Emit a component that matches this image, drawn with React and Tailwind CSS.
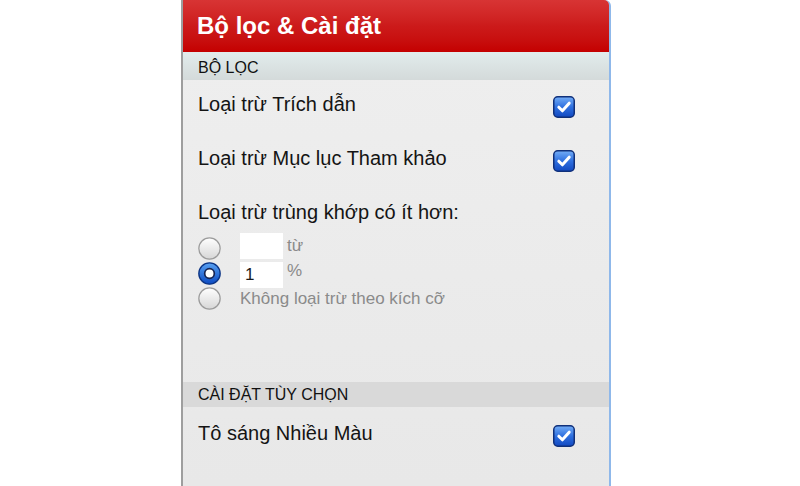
function CheckBox() {
  return (
    <svg width="22" height="22" viewBox="0 0 22 22" className="shrink-0">
      <defs>
        <linearGradient id="cbFill" x1="0" y1="0" x2="0" y2="1">
          <stop offset="0" stopColor="#74aef7" />
          <stop offset="0.5" stopColor="#2f70e0" />
          <stop offset="1" stopColor="#1148c0" />
        </linearGradient>
      </defs>
      <rect x="0.75" y="0.75" width="20.5" height="20.5" rx="4" fill="url(#cbFill)" stroke="#10307a" strokeWidth="1.5" />
      <path d="M5.8 11.2 L9.4 14.8 L16.2 7.2" fill="none" stroke="#ffffff" strokeWidth="3" strokeLinecap="round" strokeLinejoin="round" />
    </svg>
  );
}

function Radio({ checked }) {
  if (checked) {
    return (
      <svg width="23" height="23" viewBox="0 0 22 22" className="shrink-0">
        <defs>
          <linearGradient id="rdOn" x1="0" y1="0" x2="0" y2="1">
            <stop offset="0" stopColor="#5aa2f2" />
            <stop offset="1" stopColor="#0c4ac2" />
          </linearGradient>
        </defs>
        <circle cx="11" cy="11" r="10.2" fill="url(#rdOn)" stroke="#0d3585" strokeWidth="1.3" />
        <circle cx="11" cy="11" r="4.6" fill="#ffffff" stroke="#172452" strokeWidth="1.6" />
      </svg>
    );
  }
  return (
    <svg width="23" height="23" viewBox="0 0 22 22" className="shrink-0">
      <defs>
        <linearGradient id="rdOff" x1="0" y1="0" x2="0" y2="1">
          <stop offset="0" stopColor="#ffffff" />
          <stop offset="1" stopColor="#d6d6d6" />
        </linearGradient>
      </defs>
      <circle cx="11" cy="11" r="10.2" fill="url(#rdOff)" stroke="#9c9c9c" strokeWidth="1.2" />
    </svg>
  );
}

function OptionRow({ label, className }) {
  return (
    <div className={`flex justify-between pl-[15px] pr-[34px] ${className}`}>
      <span className="text-[20px] leading-[24px] mt-[-4px] text-[#141414]">{label}</span>
      <CheckBox />
    </div>
  );
}

export default function App() {
  return (
    <div className="w-full h-[486px] bg-white overflow-hidden font-['Liberation_Sans',Arial,sans-serif]">
      <div className="ml-[181px] w-[430px] h-full flex flex-col border-l-2 border-[#9e9e9e] border-r-2 border-r-[#8fb8ea] rounded-tr-[6px] bg-gradient-to-b from-[#efefef] to-[#e8e8e8]">
        <div className="h-[52px] flex items-center pl-[14px] rounded-tr-[5px] bg-gradient-to-b from-[#d83434] via-[#cc1a1a] to-[#c40000]">
          <h1 className="text-[24px] font-bold text-white leading-none">Bộ lọc &amp; Cài đặt</h1>
        </div>

        <div className="h-[28px] flex items-center pt-[3px] pl-[15px] bg-gradient-to-b from-[#e2ecec] to-[#d4dada]">
          <span className="text-[16px] text-[#111]">BỘ LỌC</span>
        </div>

        <OptionRow label="Loại trừ Trích dẫn" className="pt-[16px] h-[54px]" />
        <OptionRow label="Loại trừ Mục lục Tham khảo" className="pt-[16px] h-[54px]" />

        <div className="pl-[15px] pt-[12px]">
          <p className="text-[20px] leading-[24px] text-[#141414]">Loại trừ trùng khớp có ít hơn:</p>
        </div>

        <div className="flex flex-col pl-[15px] mt-[12px] text-[17px] text-[#8a8a8a]">
          <div className="h-[25px] flex items-center">
            <Radio />
            <div className="ml-[19px] w-[43px] h-[26px] self-start -mt-[3px] bg-white" />
            <span className="ml-[4px] -mt-[6px]">từ</span>
          </div>
          <div className="h-[25px] flex items-center">
            <Radio checked />
            <div className="ml-[19px] w-[43px] h-[26px] self-start mt-[1px] bg-white flex items-center pl-[5px] text-[17px] text-[#1a1a1a]">1</div>
            <span className="ml-[4px] -mt-[6px]">%</span>
          </div>
          <div className="h-[25px] flex items-center">
            <Radio />
            <span className="ml-[19px]">Không loại trừ theo kích cỡ</span>
          </div>
        </div>

        <div className="mt-[71px] h-[25px] flex items-center pl-[15px] bg-[#d9d9d9]">
          <span className="text-[16px] text-[#111]">CÀI ĐẶT TÙY CHỌN</span>
        </div>

        <OptionRow label="Tô sáng Nhiều Màu" className="pt-[18px]" />
      </div>
    </div>
  );
}
